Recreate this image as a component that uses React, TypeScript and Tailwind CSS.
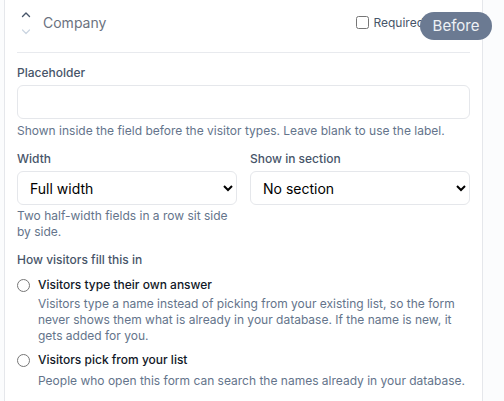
import React from "react";

export default function App() {
  return (
    <div
      className="relative w-[504px] h-[401px] overflow-hidden bg-[#fbfcfd]"
      style={{ fontFamily: "Inter, 'Noto Sans', sans-serif" }}
    >
      <div className="ml-[4px] w-[479px] h-[401px] border-x border-[#e5e7eb] bg-white px-[12px]">
        {/* header */}
        <div className="h-[53px] border-b border-[#e8eaee]">
          <div className="flex h-[45px] items-center">
            <div className="ml-[3px] w-[12px] flex flex-col items-center">
              <svg width="12" height="26" viewBox="0 0 12 26" fill="none">
                <path d="M2.5 6.5 L6 3 L9.5 6.5" stroke="#475569" strokeWidth="1.4" strokeLinecap="round" strokeLinejoin="round" />
                <path d="M2.5 20 L6 23.5 L9.5 20" stroke="#cbd5e1" strokeWidth="1.2" strokeLinecap="round" strokeLinejoin="round" />
              </svg>
            </div>
            <span className="ml-[11px] text-[14px] text-[#6b7280]">Company</span>
            <label className="ml-auto mr-[46px] flex items-center gap-[4px] text-[12px] text-[#475569]">
              <input type="checkbox" className="m-0 w-[13px] h-[13px]" />
              Required
            </label>
          </div>
        </div>

        {/* placeholder */}
        <div className="mt-[12px] text-[12px] leading-[16px] font-medium text-[#475569]">Placeholder</div>
        <input
          type="text"
          className="mt-[4px] block w-full h-[34px] rounded-[6px] border border-[#e5e7eb] bg-white px-3 text-[14px]"
        />
        <div className="mt-[4px] text-[12px] leading-[16px] text-[#64748b]">
          Shown inside the field before the visitor types. Leave blank to use the label.
        </div>

        {/* width / section */}
        <div className="mt-[12px] grid grid-cols-2 gap-x-[13px]">
          <div>
            <div className="text-[12px] leading-[16px] font-medium text-[#475569]">Width</div>
            <select className="mt-[4px] block w-full h-[34px] rounded-[6px] border border-[#e5e7eb] bg-white pl-[8px] pr-[4px] text-[14px] text-black">
              <option>Full width</option>
              <option>Half width</option>
            </select>
            <div className="mt-[3px] text-[12px] leading-[16px] text-[#64748b]">
              Two half-width fields in a row sit side by side.
            </div>
          </div>
          <div>
            <div className="text-[12px] leading-[16px] font-medium text-[#475569]">Show in section</div>
            <select className="mt-[4px] block w-full h-[34px] rounded-[6px] border border-[#e5e7eb] bg-white pl-[8px] pr-[4px] text-[14px] text-black">
              <option>No section</option>
            </select>
          </div>
        </div>

        {/* radios */}
        <div className="mt-[12px] text-[12px] leading-[16px] font-medium text-[#475569]">How visitors fill this in</div>
        <label className="mt-[9px] flex items-start gap-[8px]">
          <input type="radio" name="fill" className="m-0 mt-[1.5px] w-[13px] h-[13px] shrink-0" />
          <div>
            <div className="text-[12px] leading-[16px] font-medium text-[#111827]">Visitors type their own answer</div>
            <div className="mt-[3px] text-[12px] leading-[16px] text-[#64748b] pr-[14px]">
              Visitors type a name instead of picking from your existing list, so the form never shows them what is already in your database. If the name is new, it gets added for you.
            </div>
          </div>
        </label>
        <label className="mt-[8px] flex items-start gap-[8px]">
          <input type="radio" name="fill" className="m-0 mt-[1.5px] w-[13px] h-[13px] shrink-0" />
          <div>
            <div className="text-[12px] leading-[16px] font-medium text-[#111827]">Visitors pick from your list</div>
            <div className="mt-[5px] text-[12px] leading-[16px] text-[#64748b]">
              People who open this form can search the names already in your database.
            </div>
          </div>
        </label>
      </div>

      <div className="absolute left-[420px] top-[12px] flex h-[28px] w-[72px] items-center justify-center rounded-full bg-[#6b7a92] text-[15px] text-[#eef1f5]">
        Before
      </div>
    </div>
  );
}
